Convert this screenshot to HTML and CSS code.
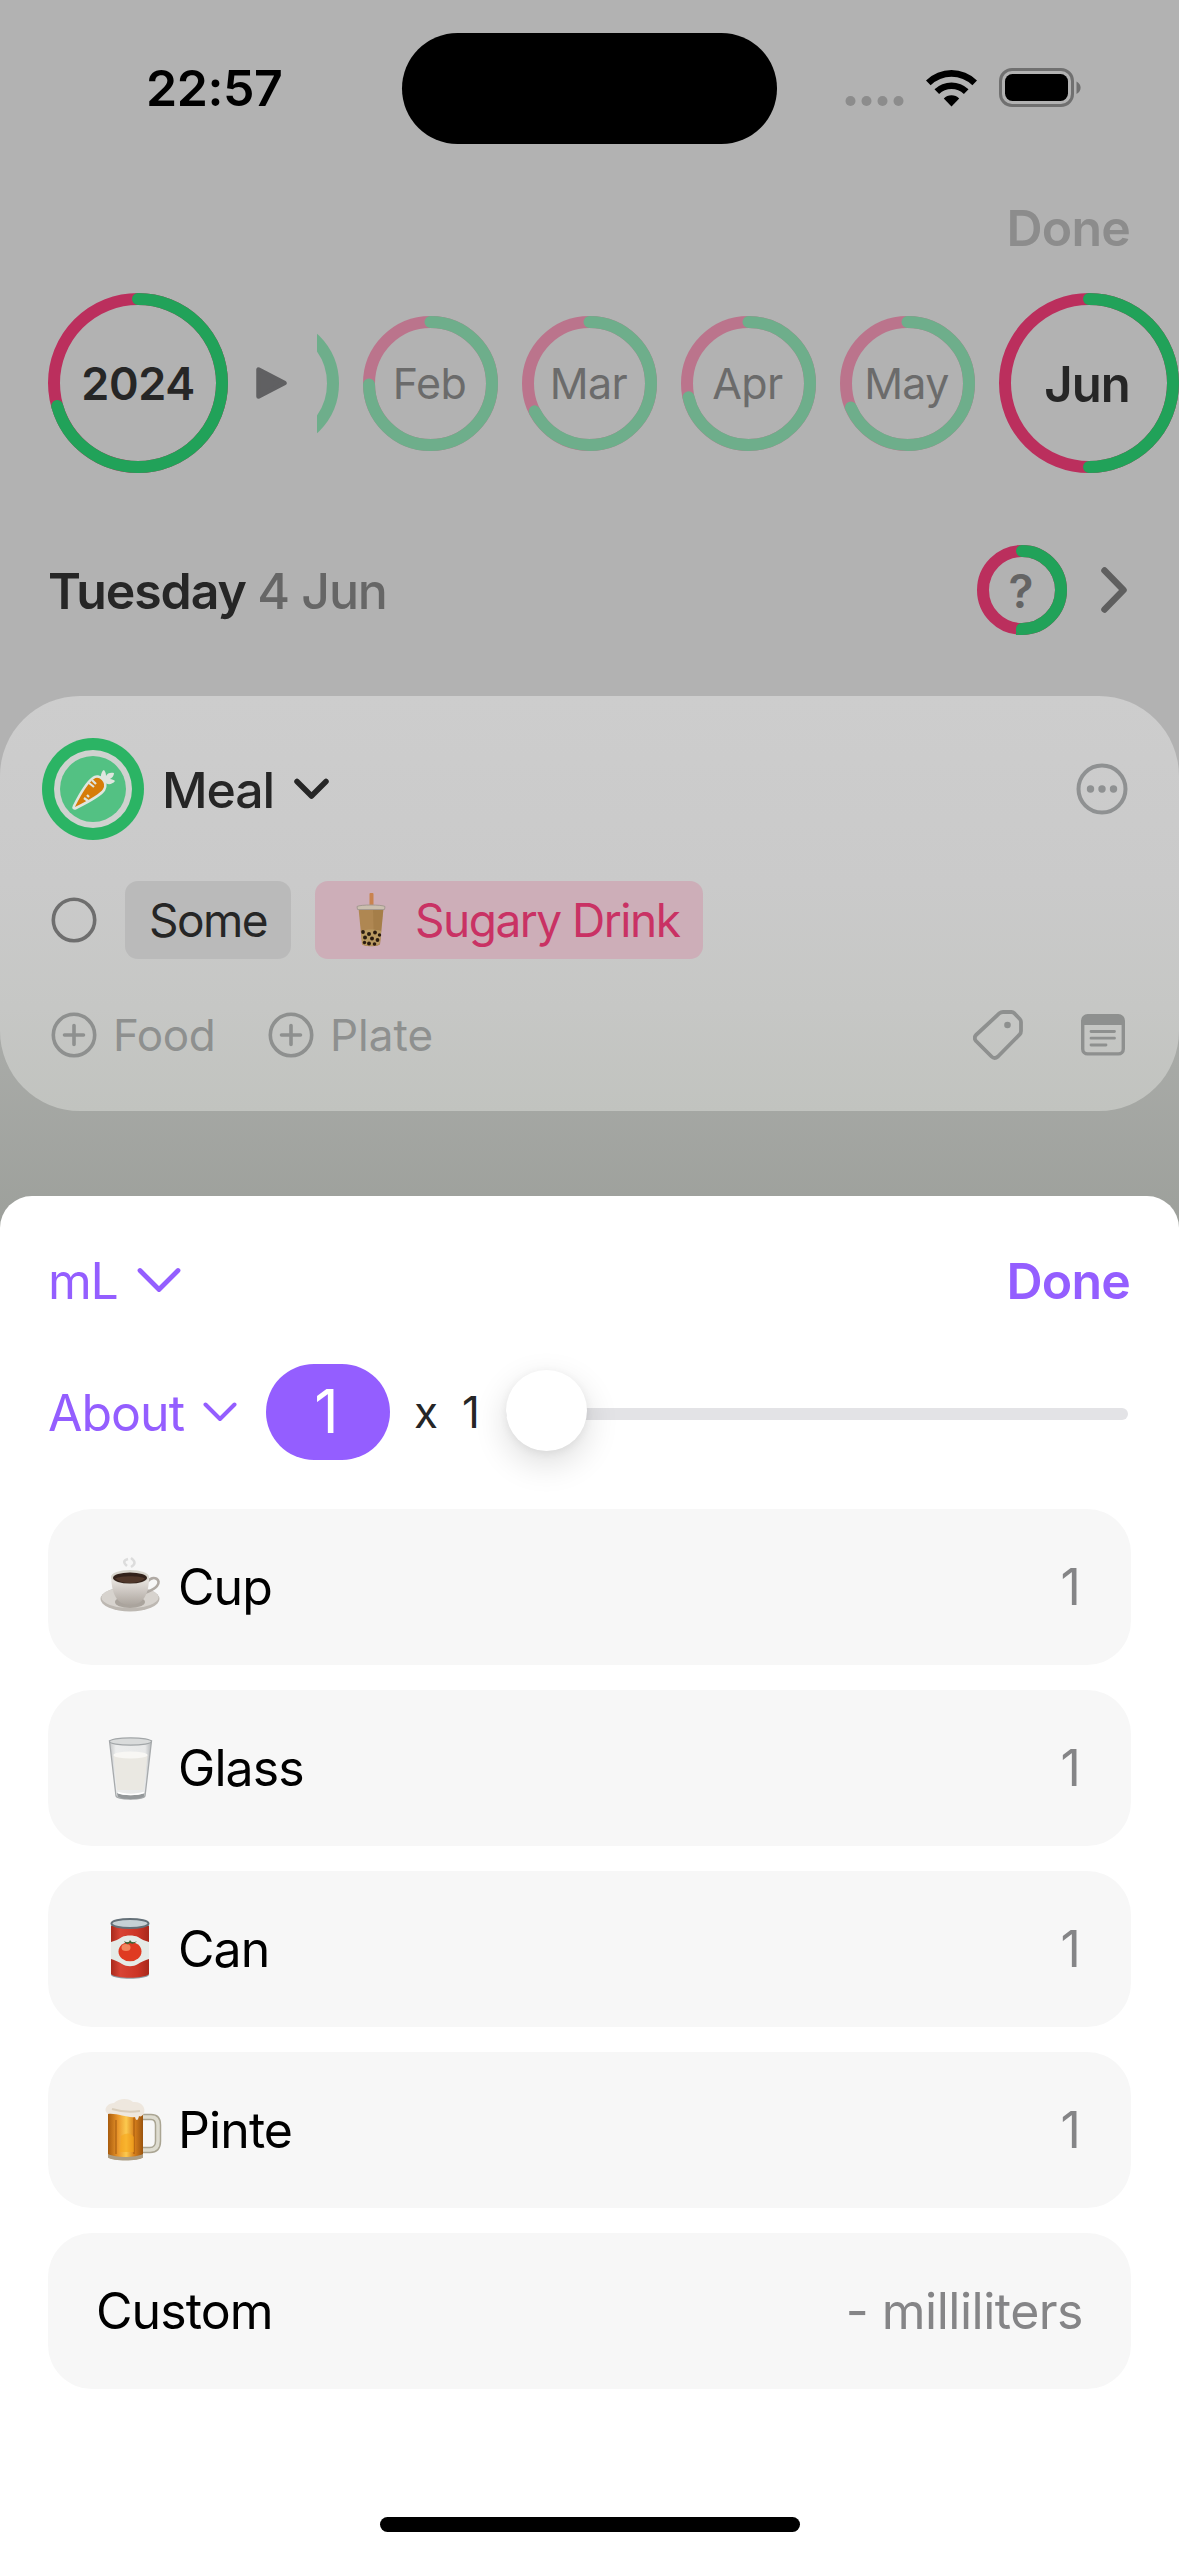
FILE: index.html
```
<!DOCTYPE html>
<html lang="en">
<head>
<meta charset="utf-8">
<title>Food journal</title>
<link rel="stylesheet" href="styles.css">
</head>
<body>
<div class="screen">
  <header class="status">
    <span class="time">22:57</span>
    <div class="island"></div>
    <div class="status-icons">
      <svg class="cell" width="60" height="10" viewBox="0 0 60 10"><g fill="#8c8c8c"><circle cx="5.500" cy="5" r="5"/><circle cx="21.500" cy="5" r="5"/><circle cx="37.500" cy="5" r="5"/><circle cx="53.500" cy="5" r="5"/></g></svg>
      <svg class="wifi" width="51" height="38" viewBox="0 0 51 38"><path d="M25.500 37.500 17.800 29.500a11 11 0 0 1 15.400 0z"/><path d="M8.500 20.200l4.600 4.700a18 18 0 0 1 24.800 0l4.600-4.700a24.600 24.600 0 0 0-34 0z"/><path d="M0 11.500l4.600 4.700a30 30 0 0 1 41.800 0l4.600-4.700a36.500 36.500 0 0 0-51 0z"/></svg>
      <svg class="battery" width="83" height="39" viewBox="0 0 83 39"><rect x="1.500" y="1.500" width="72" height="36" rx="11.500" fill="none" stroke="#707070" stroke-width="3"/><rect x="6" y="6" width="63" height="27" rx="7.500"/><path d="M77.500 13.500c5.500 2.500 5.500 10 0 12.500z" fill="#707070"/></svg>
    </div>
  </header>

  <div class="topbar"><span class="done-dim">Done</span></div>

  <section class="periods">
    <div class="ring big"><svg viewBox="0 0 180 180"><circle class="r" cx="90" cy="90" r="84"/><circle class="g" cx="90" cy="90" r="84" pathLength="360" stroke-dasharray="254 360"/></svg><span class="year">2024</span></div>
    <svg class="play" width="31" height="32" viewBox="0 0 31 32"><path d="M2.500 2.500v27L28.500 16z" fill="#606062" stroke="#606062" stroke-width="4.500" stroke-linejoin="round"/></svg>
    <div class="months">
      <div class="ring small"><svg viewBox="0 0 135 135"><circle class="g" cx="67.500" cy="67.500" r="61.500"/></svg></div>
      <div class="ring small"><svg viewBox="0 0 135 135"><circle class="r" cx="67.500" cy="67.500" r="61.500"/><circle class="g" cx="67.500" cy="67.500" r="61.500" pathLength="360" stroke-dasharray="269 360"/></svg><span>Feb</span></div>
      <div class="ring small"><svg viewBox="0 0 135 135"><circle class="r" cx="67.500" cy="67.500" r="61.500"/><circle class="g" cx="67.500" cy="67.500" r="61.500" pathLength="360" stroke-dasharray="243 360"/></svg><span>Mar</span></div>
      <div class="ring small"><svg viewBox="0 0 135 135"><circle class="r" cx="67.500" cy="67.500" r="61.500"/><circle class="g" cx="67.500" cy="67.500" r="61.500" pathLength="360" stroke-dasharray="257 360"/></svg><span>Apr</span></div>
      <div class="ring small"><svg viewBox="0 0 135 135"><circle class="r" cx="67.500" cy="67.500" r="61.500"/><circle class="g" cx="67.500" cy="67.500" r="61.500" pathLength="360" stroke-dasharray="247 360"/></svg><span>May</span></div>
      <div class="ring big"><svg viewBox="0 0 180 180"><circle class="r" cx="90" cy="90" r="84"/><circle class="g" cx="90" cy="90" r="84" pathLength="360" stroke-dasharray="180 360"/></svg><span class="jun">Jun</span></div>
    </div>
  </section>

  <section class="date">
    <h1><b>Tuesday</b> <span>4 Jun</span></h1>
    <div class="ring mini"><svg viewBox="0 0 90 90"><circle class="r" cx="45" cy="45" r="39"/><circle class="g" cx="45" cy="45" r="39" pathLength="360" stroke-dasharray="180 360"/></svg><span>?</span></div>
    <svg class="next" width="28" height="48" viewBox="0 0 28 48"><path d="M4.500 4.500 23.500 24 4.500 43.500" fill="none" stroke="#5f5f5f" stroke-width="6.500" stroke-linecap="round" stroke-linejoin="round"/></svg>
  </section>

  <section class="card">
    <div class="meal">
      <svg class="avatar" width="102" height="102" viewBox="0 0 102 102">
        <circle cx="51" cy="51" r="51" fill="#2bb464"/><circle cx="51" cy="51" r="39" fill="#cfd2cf"/><circle cx="51" cy="51" r="33" fill="#53c183"/>
        <path d="M60 42c-3-5 1-10 2-10 2 2 2 5 2 6 1-3 5-4 8-3 0 3-2 5-4 6 2 0 4 1 5 2-3 4-8 4-11 1z" fill="#dfe6df"/>
        <path d="M51 40c6-5 16 4 11 12-3 5-20 14-28 18-2 1-3 0-2-2 4-8 12-23 19-28z" fill="#d67c08" stroke="#dfe6df" stroke-width="2.600"/>
        <path d="M47 45l5 4M50 42l4 4M42 60l4 3M45 57l2 2" stroke="#dfe6df" stroke-width="2.200" fill="none"/>
      </svg>
      <span class="meal-name">Meal</span>
      <svg class="meal-chev" width="35" height="22" viewBox="0 0 35 22"><path d="M3 3.500 17.500 18 32 3.500" fill="none" stroke="#262626" stroke-width="5.500" stroke-linecap="round" stroke-linejoin="round"/></svg>
      <svg class="more" width="52" height="52" viewBox="0 0 52 52"><circle cx="26" cy="26" r="23.500" fill="none" stroke="#8f9192" stroke-width="4"/><g fill="#8f9192"><circle cx="14.500" cy="26" r="3.700"/><circle cx="26" cy="26" r="3.700"/><circle cx="37.500" cy="26" r="3.700"/></g></svg>
    </div>
    <div class="item">
      <svg width="46" height="46" viewBox="0 0 46 46"><circle cx="23" cy="23" r="20.700" fill="none" stroke="#6e6e6e" stroke-width="3.600"/></svg>
      <span class="tag grey">Some</span>
      <span class="tag pink">
        <svg width="30" height="54" viewBox="0 0 30 54">
          <rect x="13.500" y="0" width="4" height="18" rx="1" fill="#c9834f"/>
          <path d="M2.500 15h25l-3.500 36c-.5 3-17.500 3-18 0z" fill="#af8752"/>
          <path d="M17 15h10.500l-3.500 36c-1 1-4 2-6 2z" fill="#9c753f" opacity=".5"/>
          <path d="M1 13.500c3-2 25-2 28 0l-.5 3h-27z" fill="#cbbfae" stroke="#a59a92" stroke-width="1"/>
          <path d="M4.800 38c6-2 14-2 20.400 0l-1.500 12.500c-2 3-15.500 3-17.400 0z" fill="#b99a62"/>
          <g fill="#2b1c10"><circle cx="7" cy="39" r="1.900"/><circle cx="13" cy="41" r="2"/><circle cx="19" cy="39.500" r="1.900"/><circle cx="23.500" cy="42" r="1.700"/><circle cx="9" cy="44.500" r="2"/><circle cx="16" cy="45.500" r="2"/><circle cx="21.500" cy="47" r="1.900"/><circle cx="8.500" cy="49.500" r="1.700"/><circle cx="13" cy="50.500" r="1.900"/><circle cx="18.500" cy="51" r="1.800"/></g>
        </svg>
        <span>Sugary Drink</span>
      </span>
    </div>
    <div class="actions">
      <svg width="46" height="46" viewBox="0 0 46 46"><g fill="none" stroke="#8e908f" stroke-width="3.600" stroke-linecap="round"><circle cx="23" cy="23" r="20.700"/><path d="M23 13.500v19M13.500 23h19"/></g></svg>
      <span class="food">Food</span>
      <svg width="46" height="46" viewBox="0 0 46 46"><g fill="none" stroke="#8e908f" stroke-width="3.600" stroke-linecap="round"><circle cx="23" cy="23" r="20.700"/><path d="M23 13.500v19M13.500 23h19"/></g></svg>
      <span class="plate">Plate</span>
      <svg class="label" width="50" height="50" viewBox="0 0 50 50"><path d="M26.500 3.200Q28 2 30 2h8.500q1.500 0 2.700 1.200l5.600 5.800Q48 10.200 48 12v9q0 2-1.300 3.400L25 46.500q-3.500 3-6.500 0L3 31q-2.500-3 0-6z" fill="none" stroke="#8e908f" stroke-width="3.800" stroke-linejoin="round"/><circle cx="34.500" cy="15" r="3.300" fill="#8e908f"/></svg>
      <svg class="note" width="44" height="42" viewBox="0 0 44 42"><rect x="1.700" y="1.700" width="40.600" height="38.200" rx="5" fill="none" stroke="#8e908f" stroke-width="3.400"/><path d="M1 11V6.500Q1 1 7 1h30q6 0 6 5.500V11z" fill="#8e908f"/><path d="M10 17.500h23.500M10 24.200h23.500M10 31h15" stroke="#8e908f" stroke-width="2.800" stroke-linecap="round"/></svg>
    </div>
  </section>
</div>

<main class="sheet">
  <div class="sheet-head">
    <span class="unit">mL</span>
    <svg class="unit-chev" width="44" height="26" viewBox="0 0 44 26"><path d="M3 3.500 22 22.500 41 3.500" fill="none" stroke="#945eff" stroke-width="4.800" stroke-linecap="round" stroke-linejoin="round"/></svg>
    <span class="done">Done</span>
  </div>
  <div class="amount">
    <span class="about">About</span>
    <svg class="about-chev" width="34" height="20" viewBox="0 0 34 20"><path d="M2.500 2.500 17 17 31.500 2.500" fill="none" stroke="#945eff" stroke-width="4" stroke-linecap="round" stroke-linejoin="round"/></svg>
    <span class="count">1</span>
    <span class="times">x</span><span class="mult">1</span>
    <div class="slider"><div class="track"></div><div class="knob"></div></div>
  </div>
  <div class="options">
    <div class="option">
      <svg class="emoji" width="64" height="64" viewBox="0 0 64 64">
        <defs><linearGradient id="porcelain" x1="0" x2="0" y1="0" y2="1"><stop offset="0" stop-color="#eeeae6"/><stop offset="1" stop-color="#aca59e"/></linearGradient></defs>
        <path d="M28 11q-6-5 1-7M32 12q7-4 0-9" stroke="#dcdcdc" stroke-width="2.500" fill="none"/>
        <ellipse cx="31" cy="44" rx="29.500" ry="12.500" fill="#bdb8b2"/><ellipse cx="31" cy="42.500" rx="28.500" ry="10.500" fill="#d7d3ce"/><ellipse cx="31" cy="47" rx="15" ry="6" fill="#aaa49d"/>
        <path d="M48 27c7-8 15-2 10 4-3 4-8 5-12 7" fill="none" stroke="#b0aaa4" stroke-width="2.600"/>
        <path d="M12 22c1 16 5 28 19 28s19-12 19-28z" fill="url(#porcelain)"/>
        <ellipse cx="31" cy="22" rx="19" ry="7" fill="#d8d5cd"/><ellipse cx="31" cy="23" rx="17" ry="5.500" fill="#33221b"/><path d="M16 23.500c7 6 23 6 30 0-5-3-24-3-30 0z" fill="#50372a"/>
      </svg>
      <span class="name">Cup</span><span class="value">1</span>
    </div>
    <div class="option">
      <svg class="emoji" width="64" height="64" viewBox="0 0 64 64">
        <defs><linearGradient id="glass" x1="0" x2="1"><stop offset="0" stop-color="#c4c6c7"/><stop offset=".15" stop-color="#eceded"/><stop offset=".85" stop-color="#e7e8e8"/><stop offset="1" stop-color="#b4b7b9"/></linearGradient></defs>
        <path d="M10.500 5h42l-6.500 55c-1 4-28 4-29 0z" fill="url(#glass)" stroke="#a7aaac" stroke-width="1.300"/>
        <path d="M14.500 19c9-4 25-4 34 0l-4 35H18z" fill="#eae8e2"/><ellipse cx="31.500" cy="19" rx="17" ry="3.600" fill="#f8f7f4"/>
        <ellipse cx="31.500" cy="5.500" rx="21" ry="3.700" fill="#d9dbdb" stroke="#a2a6a8" stroke-width="1.200"/>
        <path d="M18 57c6 3 21 3 27.500 0l-.4 3.500c-5 3.500-22 3.500-26.500 0z" fill="#94989a"/><path d="M19 56.500c6 2.500 19 2.500 26 0" fill="none" stroke="#fff" stroke-width="1.500"/>
      </svg>
      <span class="name">Glass</span><span class="value">1</span>
    </div>
    <div class="option">
      <svg class="emoji" width="64" height="64" viewBox="0 0 64 64">
        <defs><linearGradient id="can" x1="0" x2="1"><stop offset="0" stop-color="#a92a1c"/><stop offset=".25" stop-color="#d84435"/><stop offset=".7" stop-color="#cc3526"/><stop offset="1" stop-color="#a8281b"/></linearGradient></defs>
        <path d="M12 6v52c3 5 35 5 38 0V6z" fill="#8c9aa2"/><path d="M12 9v48c5 5 33 5 38 0V9z" fill="url(#can)"/>
        <path d="M12 25c4-1 8-3 11-5 4-2 12-2 16 0 3 2 7 4 11 5v17c-4 1-8 3-11 5-5 3-11 3-16 0-3-2-7-4-11-5z" fill="#e5ebe7"/>
        <ellipse cx="31" cy="6.500" rx="18.500" ry="4.500" fill="#c6d1d5" stroke="#647078" stroke-width="2"/>
        <ellipse cx="31" cy="34.500" rx="11.500" ry="9.800" fill="#df3b21"/><ellipse cx="27" cy="30.500" rx="4.500" ry="3.500" fill="#f8a073" opacity=".75"/>
        <path d="M25 24q5 3 6-1 2 4 7 1-3 4-7 2-4 3-6-2z" fill="#3c6638"/>
      </svg>
      <span class="name">Can</span><span class="value">1</span>
    </div>
    <div class="option">
      <svg class="emoji" width="64" height="64" viewBox="0 0 64 64">
        <defs><linearGradient id="beer" x1="0" x2="1"><stop offset="0" stop-color="#a85b0d"/><stop offset=".28" stop-color="#e9952a"/><stop offset=".52" stop-color="#fcca4f"/><stop offset=".75" stop-color="#d9801b"/><stop offset="1" stop-color="#9a540f"/></linearGradient></defs>
        <path d="M41 19h11q7 0 7 8v16q0 9-8 9H41" fill="none" stroke="#aaa593" stroke-width="6.500"/><path d="M41 19h11q7 0 7 8v16q0 9-8 9H41" fill="none" stroke="#dedcd0" stroke-width="3.500"/>
        <path d="M9 13h35v46c-3 4-32 4-35 0z" fill="url(#beer)"/><path d="M17 22v34M35 20v36" stroke="#8e4b08" stroke-width="1.500" opacity=".5"/><path d="M22 38c6-4 10-3 13 1v15H21z" fill="#f7a71a" opacity=".6"/>
        <path d="M9 56c8 4 27 4 35 0v3.500c-4 4-31 4-35 0z" fill="#ac9d83"/>
        <path d="M7 14c-2-5 3-9 8-9 5-5 15-5 19-1 8-1 13 5 11 11-1 3-4 4-5 3-1 5-3 5-4 1-8 1-18-4-27-3z" fill="#eee7de"/><path d="M13 11q13 4 28 2" fill="none" stroke="#d9cdbb" stroke-width="2"/>
      </svg>
      <span class="name">Pinte</span><span class="value">1</span>
    </div>
    <div class="option">
      <span class="name">Custom</span><span class="value long">- milliliters</span>
    </div>
  </div>
  <div class="home"></div>
</main>
</body>
</html>
```
FILE: styles.css
```
* { box-sizing: border-box; }
html, body { margin: 0; padding: 0; }
body {
  width: 1179px;
  height: 2556px;
  overflow: hidden;
  display: flex;
  flex-direction: column;
  font-family: Inter, "Liberation Sans", sans-serif;
  color: #262626;
  background: linear-gradient(#b2b2b2 0, #b2b2b2 820px, #a9aba8 1040px, #9c9f9a 1240px);
}
svg { display: block; flex: none; }
span { white-space: nowrap; }
.screen { height: 1196px; flex: none; display: flex; flex-direction: column; }

.status { height: 178px; display: flex; align-items: flex-start; padding-top: 33px; }
.time { width: 402px; padding: 25px 0 0 146px; font-size: 50px; line-height: 60px; font-weight: 600; letter-spacing: -.4px; color: #000; }
.island { width: 375px; height: 111px; border-radius: 56px; background: #000; }
.status-icons { display: flex; align-items: flex-start; padding-left: 68px; }
.cell { margin-top: 63px; }
.wifi { margin: 36px 0 0 21px; }
.battery { margin: 35px 0 0 22px; }

.topbar { height: 115px; display: flex; justify-content: flex-end; padding: 20px 49px 0 0; }
.done-dim, .done { font-size: 50px; line-height: 60px; font-weight: 600; letter-spacing: -.8px; }
.done-dim { color: #8c8c8c; }

.ring { position: relative; flex: none; display: grid; place-items: center; }
.ring > * { grid-area: 1 / 1; }
.ring svg { width: 100%; height: 100%; transform: rotate(-90deg); }
.ring circle { fill: none; stroke-width: 12; }
.ring .r { stroke: #bb2f5d; }
.ring .g { stroke: #21a259; stroke-linecap: round; }
.big { width: 180px; height: 180px; }
.small { width: 135px; height: 135px; opacity: .5; font-size: 43px; letter-spacing: -.6px; }
.small .r { stroke: #c43867; }
.small .g { stroke: #2cab65; }
.small span { padding-right: 2px; }
.mini { width: 90px; height: 90px; font-size: 46px; font-weight: 600; color: #646464; }
.mini span { padding: 2px 2px 0 0; }
.year { font-size: 45px; font-weight: 600; letter-spacing: -.4px; }
.jun { font-size: 49px; font-weight: 600; letter-spacing: -1px; padding: 2px 4px 0 0; }

.periods { height: 180px; display: flex; align-items: center; padding-left: 48px; }
.play { margin-left: 28px; }
.months { margin-left: 30px; width: 862px; height: 180px; overflow: hidden; display: flex; align-items: center; justify-content: flex-end; gap: 24px; }

.date { height: 223px; display: flex; align-items: flex-start; padding: 72px 51px 0 48px; }
h1 { margin: 16px auto 0 0; font-size: 50px; line-height: 60px; font-weight: 600; letter-spacing: -1.1px; }
h1 b { font-weight: 600; }
h1 span { color: #666; font-weight: 500; }
.next { margin: 21px 0 0 33px; }

.card { height: 415px; border-radius: 80px; background: linear-gradient(#cdcdcd, #cacaca 45%, #c6c7c5 75%, #c1c3bf); }
.meal { height: 185px; display: flex; align-items: center; padding: 0 51px 0 42px; }
.meal-name { margin-left: 18px; padding-top: 2px; font-size: 50px; font-weight: 500; letter-spacing: -1.1px; }
.meal-chev { margin-left: 20px; }
.more { margin-left: auto; }
.item { height: 78px; display: flex; align-items: center; padding-left: 51px; font-size: 46px; }
.tag { height: 78px; border-radius: 13px; display: flex; align-items: center; letter-spacing: -1.5px; }
.grey { margin-left: 28px; width: 166px; justify-content: center; background: #bababa; }
.pink { margin-left: 24px; width: 388px; padding-left: 41px; gap: 29px; background: #cdaeb8; color: #c93264; }
.actions { display: flex; align-items: center; height: 152px; padding: 0 54px 0 51px; font-size: 44px; color: #8e908f; }
.food { width: 155px; margin-left: 16px; letter-spacing: -.4px; }
.plate { margin-left: 16px; }
.label { margin-left: auto; }
.note { margin-left: 58px; }

.sheet { flex: none; height: 1360px; background: #fff; border-radius: 32px 32px 0 0; display: flex; flex-direction: column; }
.sheet-head { height: 168px; display: flex; align-items: center; padding: 2px 49px 0 48px; color: #945eff; }
.unit { font-size: 50px; letter-spacing: -1.2px; }
.unit-chev { margin: 0 auto 2px 19px; }
.amount { height: 96px; display: flex; align-items: center; padding: 0 51px 0 48px; }
.about { width: 155px; padding-top: 1px; font-size: 50px; letter-spacing: -1px; color: #945eff; }
.count { margin-left: 29px; width: 124px; height: 96px; border-radius: 48px; background: #945eff; color: #fff; font-size: 60px; line-height: 95px; text-align: center; padding-right: 3px; }
.times, .mult { font-size: 44px; }
.times { margin-left: 24px; width: 48px; }
.mult { width: 44px; }
.slider { position: relative; width: 622px; height: 81px; display: flex; align-items: center; }
.track { width: 100%; height: 12px; border-radius: 6px; background: #e3e3e6; margin-top: 4px; }
.knob { position: absolute; left: 0; top: -2px; width: 81px; height: 81px; border-radius: 50%; background: #fff; box-shadow: 0 12px 34px rgba(0,0,0,.14), 0 2px 10px rgba(0,0,0,.06); }

.options { margin: 49px 48px 0; display: grid; grid-auto-rows: 156px; row-gap: 25px; }
.option { display: flex; align-items: center; padding: 0 48px 0 48px; border-radius: 44px; background: #f7f7f7; color: #000; font-size: 50px; letter-spacing: -.9px; }
.emoji { margin: 0 15px 0 3px; }
.value { margin-left: auto; padding-right: 3px; color: #858587; }
.long { padding-right: 0; letter-spacing: -.5px; }
.home { width: 420px; height: 15px; margin: 128px auto 0; border-radius: 8px; background: #000; }
```
